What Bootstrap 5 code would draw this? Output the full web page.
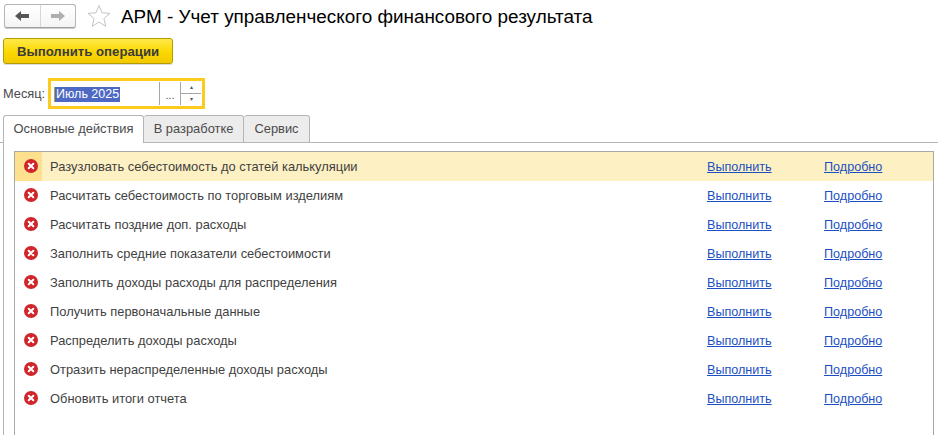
<!DOCTYPE html>
<html lang="ru">
<head>
<meta charset="utf-8">
<title>АРМ</title>
<link rel="stylesheet" href="https://cdn.jsdelivr.net/npm/bootstrap@5.3.0/dist/css/bootstrap.min.css">
<style>
html,body{height:435px;overflow:hidden}
body{background:#fff;font-family:"Liberation Sans",Arial,sans-serif;font-size:12px;color:#3f3f3f;padding:0;margin:0}
.head-line{height:38px;padding:4px 0 0 4px}
.nav-group{width:72px;height:24px;border:1px solid #b5b5b5;border-bottom-color:#a0a0a0;border-radius:3px;background:linear-gradient(#fff,#f4f4f4);box-shadow:0 1px 0 #ccc}
.nav-cell{flex:1 1 0;height:100%}
.nav-cell+.nav-cell{border-left:1px solid #d6d6d6}
.star-wrap{margin-left:11px;width:24px;height:24px}
.page-title{margin:0 0 0 10px;font-size:18.9px;font-weight:400;color:#000;line-height:26px;white-space:nowrap}
.run-ops{margin:0 0 0 3px;width:170px;height:26px;padding:0;border:1px solid #b59b00;border-radius:3px;background:linear-gradient(#ffe94a,#fbd800 55%,#f2c900);font:bold 13.200px "Liberation Sans",Arial,sans-serif;color:#3c3c3c;box-shadow:0 1px 0 #ddd}
.month-line{margin-top:14px;height:31px;padding-left:3px}
.month-label{width:45px;font-size:12.8px;color:#4b4b4b}
.month-field{width:157px;height:31px;border:3px solid #fdcb1e;background:#fff}
.month-text{width:108px;padding-left:3px}
.month-sel{background:#4d69c3;color:#fff;font-size:12.5px;line-height:15px;display:inline-block;padding:0 1px;border-left:1px solid #b9a24a}
.month-dots{width:21px;height:23px;border-left:1px solid #a6a6a6;text-align:center;line-height:27px;font-size:11px;color:#555}
.month-spin{width:21px;height:23px;border-left:1px solid #a6a6a6}
.spin-cell{flex:1 1 0;text-align:center;font-size:6px;line-height:10px;color:#555}
.spin-cell+.spin-cell{border-top:1px solid #a6a6a6}
.tab-strip{margin-top:6px;height:28px;border-bottom:1px solid #b5b5b5;padding-left:3px}
.tab-item{height:28px;border:1px solid #b5b5b5;border-left-width:0;border-radius:3px 3px 0 0;background:#ececec;font-size:12.9px;line-height:26px;text-align:center;color:#4b4b4b}
.tab-item.is-on{height:28px;background:#fff;border-left-width:1px;border-bottom:0}
.tab-a{width:141px}.tab-b{width:100px}.tab-c{width:66px}
.tab-body{margin-left:3px;height:292px;border-left:1px solid #b5b5b5;padding:8px 4px 0 10px}
.task-box{border:1px solid #a8a8a8;border-bottom:0;height:284px}
.task-row{height:29px}
.task-row.is-cur{background:#fdf1c4}
.task-ico{width:27px;height:29px;padding-left:9px}
.task-row.is-cur .task-ico{background:#fee08f}
.task-name{width:665px;padding-left:8px;font-size:12.9px;white-space:nowrap}
.task-link{color:#1c50c2;font-size:12.6px;text-decoration:underline;white-space:nowrap}
.task-run{width:117px;padding-top:1px}
.task-more{padding-top:1px}
</style>
</head>
<body>
<div class="head-line d-flex align-items-start">
  <div class="nav-group d-flex">
    <div class="nav-cell d-flex align-items-center justify-content-center"><svg width="16" height="12" viewBox="0 0 16 12"><path d="M1 6 7 1v3h8v4H7v3z" fill="#555"/></svg></div>
    <div class="nav-cell d-flex align-items-center justify-content-center"><svg width="16" height="12" viewBox="0 0 16 12"><path d="M15 6 9 1v3H1v4h8v3z" fill="#aeaeae"/></svg></div>
  </div>
  <div class="star-wrap"><svg width="24" height="24" viewBox="0 0 24 24"><path d="M12 1.500l3 7.300 8 .6-6.100 5.100 1.900 7.800L12 18.100 5.200 22.300l1.900-7.800L1 9.400l8-.6z" fill="#fff" stroke="#c4c4c4"/></svg></div>
  <h1 class="page-title">АРМ - Учет управленческого финансового результата</h1>
</div>
<button class="run-ops d-block" type="button">Выполнить операции</button>
<div class="month-line d-flex align-items-center">
  <span class="month-label">Месяц:</span>
  <div class="month-field d-flex align-items-center">
    <div class="month-text"><span class="month-sel">Июль 2025</span></div>
    <div class="month-dots">...</div>
    <div class="month-spin d-flex flex-column"><div class="spin-cell">▴</div><div class="spin-cell">▾</div></div>
  </div>
</div>
<div class="tab-strip d-flex">
  <div class="tab-item is-on tab-a">Основные действия</div>
  <div class="tab-item tab-b">В разработке</div>
  <div class="tab-item tab-c">Сервис</div>
</div>
<div class="tab-body">
  <div class="task-box" id="box"></div>
</div>
<script>
const names=["Разузловать себестоимость до статей калькуляции","Расчитать себестоимость по торговым изделиям","Расчитать поздние доп. расходы","Заполнить средние показатели себестоимости","Заполнить доходы расходы для распределения","Получить первоначальные данные","Распределить доходы расходы","Отразить нераспределенные доходы расходы","Обновить итоги отчета"];
document.getElementById('box').innerHTML=names.map((n,i)=>`<div class="task-row d-flex align-items-center${i==0?' is-cur':''}"><div class="task-ico d-flex align-items-center"><svg width="15" height="15" viewBox="0 0 15 15"><circle cx="7" cy="7" r="7" fill="#d0262b"/><path d="M4.700 4.700l4.600 4.600M9.300 4.700l-4.600 4.600" stroke="#fff" stroke-width="2" stroke-linecap="round"/></svg></div><div class="task-name">${n}</div><div class="task-run"><a class="task-link" href="#">Выполнить</a></div><div class="task-more"><a class="task-link" href="#">Подробно</a></div></div>`).join('');
</script>
<script src="https://cdn.jsdelivr.net/npm/bootstrap@5.3.0/dist/js/bootstrap.bundle.min.js"></script>
</body>
</html>
